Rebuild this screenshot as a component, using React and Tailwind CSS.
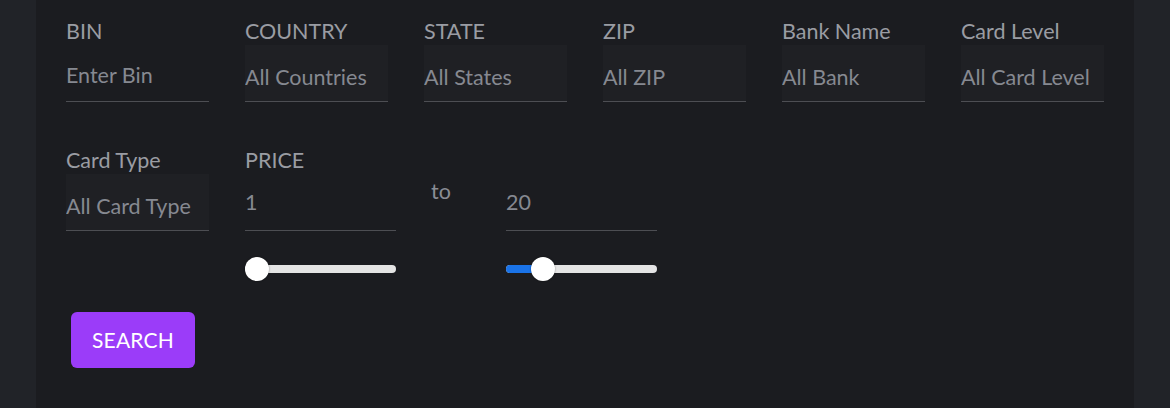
import { useState } from 'react'

const FIELDS = [
  { label: 'BIN', value: 'Enter Bin', plain: true },
  { label: 'COUNTRY', value: 'All Countries' },
  { label: 'STATE', value: 'All States' },
  { label: 'ZIP', value: 'All ZIP' },
  { label: 'Bank Name', value: 'All Bank' },
  { label: 'Card Level', value: 'All Card Level' },
]

function Field({ label, value, plain }) {
  return (
    <div className="flex flex-col">
      <label className="text-[21.5px] leading-[28px] text-[#9a9ca3] whitespace-nowrap">{label}</label>
      <div
        className={
          'h-[57px] flex items-center border-b border-[#4d4e53] text-[21.5px] text-[#868991] whitespace-nowrap overflow-hidden ' +
          (plain ? 'pt-[4px]' : 'bg-[#1f2024] pt-[8px]')
        }
      >
        {value}
      </div>
    </div>
  )
}

function Slider({ pct }) {
  return (
    <div className="relative h-[24px] w-[151px] flex items-center">
      <div className="h-[8px] w-full rounded-full bg-[#e4e4e4] overflow-hidden">
        <div className="h-full bg-[#1a73e8]" style={{ width: `${pct}%` }} />
      </div>
      <div
        className="absolute top-0 w-[24px] h-[24px] rounded-full bg-white shadow-[0_0_2px_rgba(0,0,0,0.4)]"
        style={{ left: `calc(${pct}% * (151 - 24) / 151)` }}
      />
    </div>
  )
}

export default function App() {
  const [min] = useState(1)
  const [max] = useState(20)

  return (
    <div className="min-h-[408px] bg-[#212328] px-[36px] font-['Lato','Liberation_Sans',sans-serif]">
      <div className="min-h-[408px] bg-[#1b1c20] px-[30px] pt-[17px]">
        {/* Row 1 */}
        <div className="grid grid-cols-6 gap-x-[36px]">
          {FIELDS.map((f) => (
            <Field key={f.label} {...f} />
          ))}
        </div>

        {/* Row 2 */}
        <div className="flex mt-[44px]">
          <div className="w-[143px]">
            <Field label="Card Type" value="All Card Type" />
          </div>
          <div className="ml-[36px] w-[151px] flex flex-col">
            <label className="text-[21.5px] leading-[28px] text-[#9a9ca3]">PRICE</label>
            <div className="h-[57px] flex items-center border-b border-[#4d4e53] text-[21.5px] text-[#868991]">
              {min}
            </div>
            <div className="mt-[26px]">
              <Slider pct={0} />
            </div>
          </div>
          <div className="ml-[35px] w-[75px] pt-[31px] text-[21.5px] leading-[28px] text-[#8a8d95]">to</div>
          <div className="w-[151px] flex flex-col">
            <div className="h-[28px]" />
            <div className="h-[57px] flex items-center border-b border-[#4d4e53] text-[21.5px] text-[#868991]">
              {max}
            </div>
            <div className="mt-[26px]">
              <Slider pct={20} />
            </div>
          </div>
        </div>

        <button className="mt-[31px] ml-[5px] w-[124px] h-[56px] rounded-[6px] bg-[#9b3cf9] text-white text-[21px] tracking-[0.2px]">
          SEARCH
        </button>
      </div>
    </div>
  )
}
